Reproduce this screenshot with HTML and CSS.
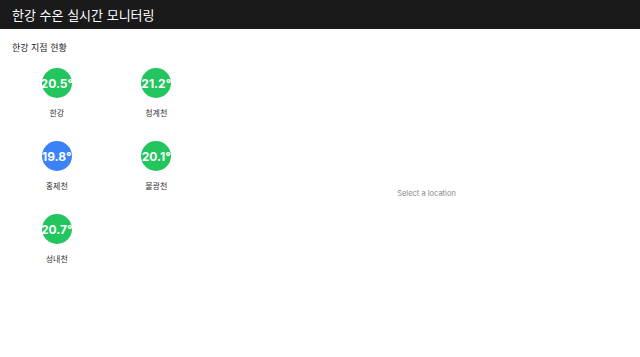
FILE: index.html
```html
<!DOCTYPE html>
<html lang="ko">
<head>
    <meta charset="UTF-8">
    <meta name="viewport" content="width=device-width, initial-scale=1.0">
    <title>한강 수온 실시간 모니터링</title>
    <link rel="stylesheet" href="styles.css">
</head>
<body>

<header class="app-header">
    <h1>한강 수온 실시간 모니터링</h1>
</header>

<div class="app-main">
    <div class="station-panel">
        <h2>한강 지점 현황</h2>
        <div class="station-grid">
            <div class="station">
                <div class="temp warm">20.5°</div>
                <div class="station-name">한강</div>
            </div>
            <div class="station">
                <div class="temp warm">21.2°</div>
                <div class="station-name">청계천</div>
            </div>
            <div class="station">
                <div class="temp cool">19.8°</div>
                <div class="station-name">홍제천</div>
            </div>
            <div class="station">
                <div class="temp warm">20.1°</div>
                <div class="station-name">불광천</div>
            </div>
            <div class="station">
                <div class="temp warm">20.7°</div>
                <div class="station-name">성내천</div>
            </div>
        </div>
    </div>
    <div class="detail-panel">
        <p class="placeholder">Select a location</p>
    </div>
</div>

</body>
</html>
```

FILE: styles.css
```css
body {
    margin: 0;
    font-family: Inter, "Noto Sans CJK KR", sans-serif;
    background-color: #fff;
    color: #222;
}
.app-header {
    height: 29px;
    background-color: #1a1a1a;
    display: flex;
    align-items: center;
    padding: 0 12px;
}
.app-header h1 {
    margin: 0;
    color: #fff;
    font-size: 13px;
    font-weight: 400;
}
.app-main {
    display: flex;
    height: 328px;
}
.station-panel {
    width: 213px;
    padding: 13px 12px;
    box-sizing: border-box;
}
.station-panel h2 {
    margin: 0 0 14px;
    font-size: 9px;
    line-height: 12px;
    font-weight: 400;
    color: #222;
}
.station-grid {
    display: grid;
    grid-template-columns: 1fr 1fr;
    column-gap: 10px;
    row-gap: 22px;
}
.station {
    display: flex;
    flex-direction: column;
    align-items: center;
}
.temp {
    width: 30px;
    height: 30px;
    border-radius: 50%;
    display: flex;
    align-items: center;
    justify-content: center;
    color: #fff;
    font-size: 12px;
    font-weight: 700;
    white-space: nowrap;
}
.temp.warm {
    background-color: #22c55e;
}
.temp.cool {
    background-color: #3b82f6;
}
.station-name {
    margin-top: 10px;
    font-size: 8px;
    line-height: 11px;
    color: #333;
}
.detail-panel {
    flex: 1;
    display: flex;
    align-items: center;
    justify-content: center;
}
.placeholder {
    margin: 0;
    font-size: 7.5px;
    color: #888;
}
```
